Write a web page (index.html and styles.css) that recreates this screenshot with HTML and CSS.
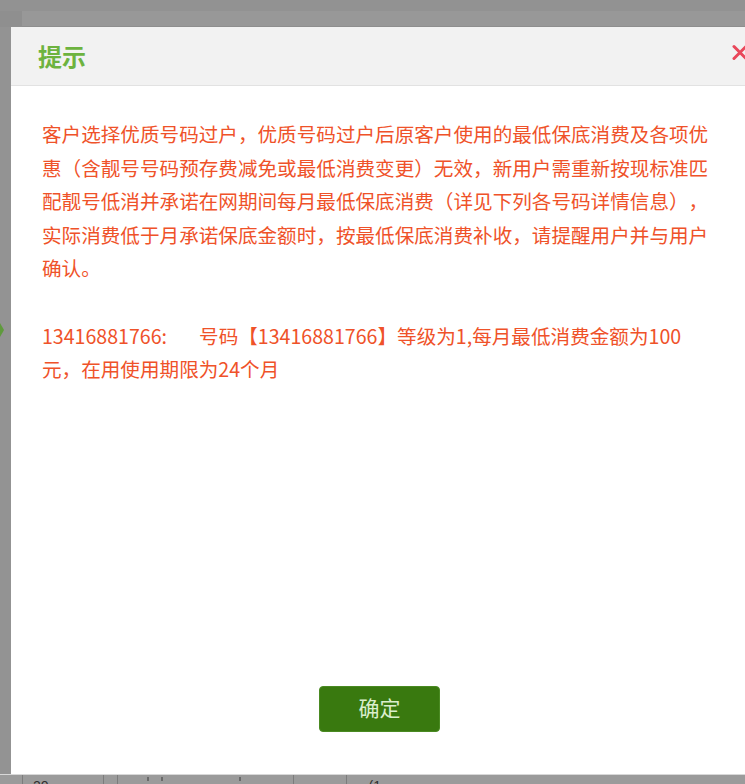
FILE: index.html
```html
<!DOCTYPE html>
<html lang="zh-CN">
<head>
<meta charset="utf-8">
<title>提示</title>
<link rel="stylesheet" href="styles.css">
</head>
<body>
<div class="page">
  <div class="top-band"></div>
  <div class="sub-band"><div class="sub-left"></div><div class="sub-main"></div></div>
  <div class="stage">
    <div class="side">
      <div class="side-arrow"></div>
    </div>
    <div class="dialog">
      <div class="dialog-head">
        <div class="dialog-title">提示</div>
        <svg class="close" width="16" height="17" viewBox="0 0 16 17" aria-label="关闭">
          <path d="M2 2.5 L14 14.5 M14 2.5 L2 14.5" stroke="#e9475a" stroke-width="3" stroke-linecap="round" fill="none"/>
        </svg>
      </div>
      <div class="dialog-body">
        <div class="message">
          <p>客户选择优质号码过户，优质号码过户后原客户使用的最低保底消费及各项优惠（含靓号号码预存费减免或最低消费变更）无效，新用户需重新按现标准匹配靓号低消并承诺在网期间每月最低保底消费（详见下列各号码详情信息），实际消费低于月承诺保底金额时，按最低保底消费补收，请提醒用户并与用户确认。</p>
          <p class="blank">&nbsp;</p>
          <p><span class="num-label">13416881766:</span>号码【13416881766】等级为1,每月最低消费金额为100元，在用使用期限为24个月</p>
        </div>
        <div class="dialog-foot">
          <button class="ok-btn" type="button">确定</button>
        </div>
      </div>
    </div>
  </div>
  <div class="bottom-bar">
    <span class="sep s1"></span>
    <span class="num">20</span>
    <span class="sep s2"></span>
    <span class="sep s3"></span>
    <span class="mark m1"></span>
    <span class="mark m2"></span>
    <span class="mark m3"></span>
    <span class="sep s4"></span>
    <span class="sep s5"></span>
    <span class="num n2">(1</span>
  </div>
</div>
</body>
</html>
```

FILE: styles.css
```css
* { box-sizing: border-box; }
html, body { margin: 0; padding: 0; }
body {
  background: #959595;
  font-family: "Noto Sans CJK SC", "Noto Sans", sans-serif;
  overflow: hidden;
}
.page {
  width: 745px;
  height: 784px;
  overflow: hidden;
  background: #959595;
}
.top-band {
  height: 11px;
  background: #929292;
}
.sub-band {
  height: 16px;
  display: flex;
}
.sub-left {
  width: 22px;
  background: #8f8f8f;
}
.sub-main {
  flex: 1;
  background: #989898;
  border-bottom: 1px solid #8e8e8e;
}
.stage {
  display: flex;
  height: 747px;
}
.side {
  width: 11px;
  flex: none;
  background: #939393;
  padding-top: 296px;
}
.side-arrow {
  width: 0;
  height: 0;
  border-top: 7px solid transparent;
  border-bottom: 7px solid transparent;
  border-left: 4px solid #5f9a3c;
}
.dialog {
  width: 737px;
  flex: none;
  background: #fff;
  display: flex;
  flex-direction: column;
}
.dialog-head {
  height: 59px;
  background: #f2f2f2;
  border-bottom: 1px solid #e2e2e2;
  display: flex;
  align-items: center;
  justify-content: space-between;
  padding-left: 27px;
  padding-bottom: 1px;
}
.dialog-title {
  font-size: 24px;
  font-weight: bold;
  color: #6db33f;
  line-height: 1;
}
.close {
  margin-top: -7px;
  display: block;
}
.dialog-body {
  flex: 1;
  display: flex;
  flex-direction: column;
}
.message {
  flex: 1;
  padding: 31px 0 0 31px;
  width: 703px;
  color: #ef5229;
  font-size: 19.6px;
  line-height: 33.6px;
  text-spacing-trim: space-all;
}
.message p {
  margin: 0;
}
.num-label {
  margin-right: 32px;
}
.dialog-foot {
  display: flex;
  justify-content: center;
  padding-bottom: 42px;
}
.ok-btn {
  width: 121px;
  height: 46px;
  background: #39790f;
  border: 1px solid #4a8a22;
  border-radius: 4px;
  color: #dbeecd;
  font-family: "Noto Sans CJK SC", "Noto Sans", sans-serif;
  font-size: 21px;
  line-height: 1;
  padding: 0 0 4px 0;
}
.bottom-bar {
  height: 10px;
  background: #9b9b9b;
  border-top: 1px solid #d8d8d8;
  display: flex;
  align-items: flex-start;
  overflow: hidden;
}
.sep {
  width: 1px;
  height: 10px;
  background: #7c7c7c;
  flex: none;
}
.s1 { margin-left: 22px; }
.num {
  font-family: "Liberation Sans", sans-serif;
  font-size: 14px;
  line-height: 14px;
  color: #2f2f2f;
  margin-top: 4px;
  margin-left: 10px;
}
.s2 { margin-left: 54px; }
.s3 { margin-left: 13px; }
.mark {
  width: 2px;
  height: 4px;
  background: #6a6a6a;
  margin-top: 2px;
  flex: none;
}
.m1 { margin-left: 29px; }
.m2 { margin-left: 12px; }
.m3 { margin-left: 76px; }
.s4 { margin-left: 52px; }
.s5 { margin-left: 52px; }
.n2 { margin-left: 22px; }
```
